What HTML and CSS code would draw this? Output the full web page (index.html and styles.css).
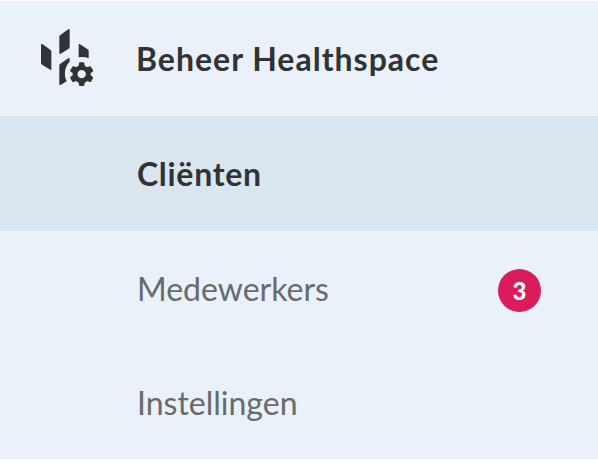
FILE: index.html
```html
<!DOCTYPE html>
<html lang="nl">
<head>
  <meta charset="UTF-8">
  <meta name="viewport" content="width=device-width, initial-scale=1.0">
  <title>Beheer Healthspace</title>
  <link rel="stylesheet" href="styles.css">
</head>
<body>

  <nav class="menu">
    <div class="menu-item menu-title">
      <svg class="menu-icon" viewBox="30 24 162 180" aria-hidden="true">
        <path d="M34 72 Q35 71 38 73 L61 89 Q64 91 64 94 V148 Q64 151 61 149 L36 134 Q33 132 33 129 V74Z"/>
        <path d="M88 50 Q88 47 91 45 L115 28 Q119 25 119 29 V80 Q119 84 116 86 L92 101 Q88 103 88 99Z"/>
        <path d="M146 74 Q146 70 150 73 L173 88 Q176 90 176 94 V115 Q161 109 146 112Z"/>
        <path d="M88 137 Q88 133 91 131 L115 115 Q119 112 119 116 V125 C105 138 100 164 110 184 L93 194 Q88 196 88 192Z"/>
        <path fill-rule="evenodd" d="M150 127 H160 Q163 127 163 130 L164 137 Q168 139 172 142 L179 139 Q182 138 183 141 L189 150 Q190 153 188 155 L182 159 V166 L188 170 Q190 172 189 175 L183 185 Q182 187 179 186 L172 183 Q168 186 164 188 L163 195 Q163 198 160 198 H150 Q147 198 147 195 L146 188 Q142 186 138 183 L131 186 Q128 187 127 185 L121 175 Q120 172 122 170 L128 166 V159 L122 155 Q120 153 121 150 L127 141 Q128 138 131 139 L138 142 Q142 139 146 137 L147 130 Q147 127 150 127Z M155 150 A12.5 12.5 0 1 0 155 175 A12.5 12.5 0 1 0 155 150Z"/>
      </svg>
      <span class="label label-title">Beheer Healthspace</span>
    </div>
    <div class="menu-item active">
      <span class="label label-active">Cliënten</span>
    </div>
    <div class="menu-item">
      <span class="label">Medewerkers</span>
      <span class="badge">3</span>
    </div>
    <div class="menu-item">
      <span class="label">Instellingen</span>
    </div>
  </nav>

</body>
</html>
```
FILE: styles.css
```css
body {
  margin: 0;
  padding-top: 1px;
  background-color: #fff;
  font-family: Lato, "Liberation Sans", sans-serif;
}
.menu {
  background-color: #eaf1f8;
  color: #666b6d;
}
.menu-item {
  display: flex;
  align-items: center;
  box-sizing: border-box;
  height: 114px;
  padding: 0 57px 0 137px;
  font-size: 32px;
  line-height: 40px;
}
.menu-title {
  height: 115px;
  padding-left: 40px;
  padding-bottom: 2px;
  color: #303335;
  font-weight: 700;
}
.menu-icon {
  width: 54px;
  height: 60px;
  margin-right: 42px;
  fill: #303335;
}
.active {
  height: 115px;
  padding-bottom: 1px;
  background-color: #dae6ef;
  color: #303335;
  font-weight: 700;
}
.label {
  padding-top: 2px;
  white-space: nowrap;
}
.label-title {
  letter-spacing: 1px;
}
.label-active {
  letter-spacing: 0.7px;
}
.badge {
  width: 43px;
  height: 43px;
  margin-top: 5px;
  margin-left: auto;
  border-radius: 50%;
  background-color: #db1c5c;
  color: #fff;
  font-size: 24px;
  font-weight: 900;
  line-height: 43px;
  text-align: center;
}
```
